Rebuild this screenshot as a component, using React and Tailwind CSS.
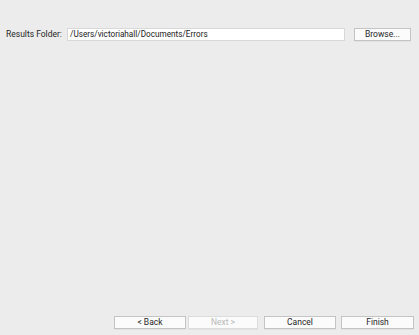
const Btn = ({ children, disabled, className = "" }) => (
  <button
    className={`flex h-[13px] shrink-0 items-center justify-center whitespace-nowrap border bg-[#fbfbfb] text-[8.5px] leading-none shadow-[0_0.5px_0_rgba(0,0,0,0.08)] ${
      disabled ? "border-[#dcdcdc] text-[#b9b9b9]" : "border-[#c4c4c4] text-[#262626]"
    } ${className}`}
  >
    {children}
  </button>
);

const App = () => {
  return (
    <div
      className="flex h-[335px] w-[419px] flex-col bg-[#ececec]"
      style={{ fontFamily: 'Roboto, "Liberation Sans", Arial, sans-serif' }}
    >
      <div className="mt-[28px] flex items-center pl-[6px] pr-[8px]">
        <span className="w-[61px] shrink-0 whitespace-nowrap text-[8.5px] leading-none text-[#262626]">
          Results Folder:
        </span>
        <div className="flex h-[13px] w-[278px] shrink-0 items-center whitespace-nowrap border border-[#d8d8d8] bg-white px-[2px] text-[8.2px] leading-none text-[#1a1a1a]">
          /Users/victoriahall/Documents/Errors
        </div>
        <Btn className="ml-[9px] w-[57px]">Browse...</Btn>
      </div>

      <div className="mt-auto mb-[6px] flex items-center pl-[114px]">
        <Btn className="w-[72px]">&lt; Back</Btn>
        <Btn disabled className="ml-[2px] w-[70px]">Next &gt;</Btn>
        <Btn className="ml-[6px] w-[72px]">Cancel</Btn>
        <Btn className="ml-[5px] w-[73px]">Finish</Btn>
      </div>
    </div>
  );
};

export default App;
